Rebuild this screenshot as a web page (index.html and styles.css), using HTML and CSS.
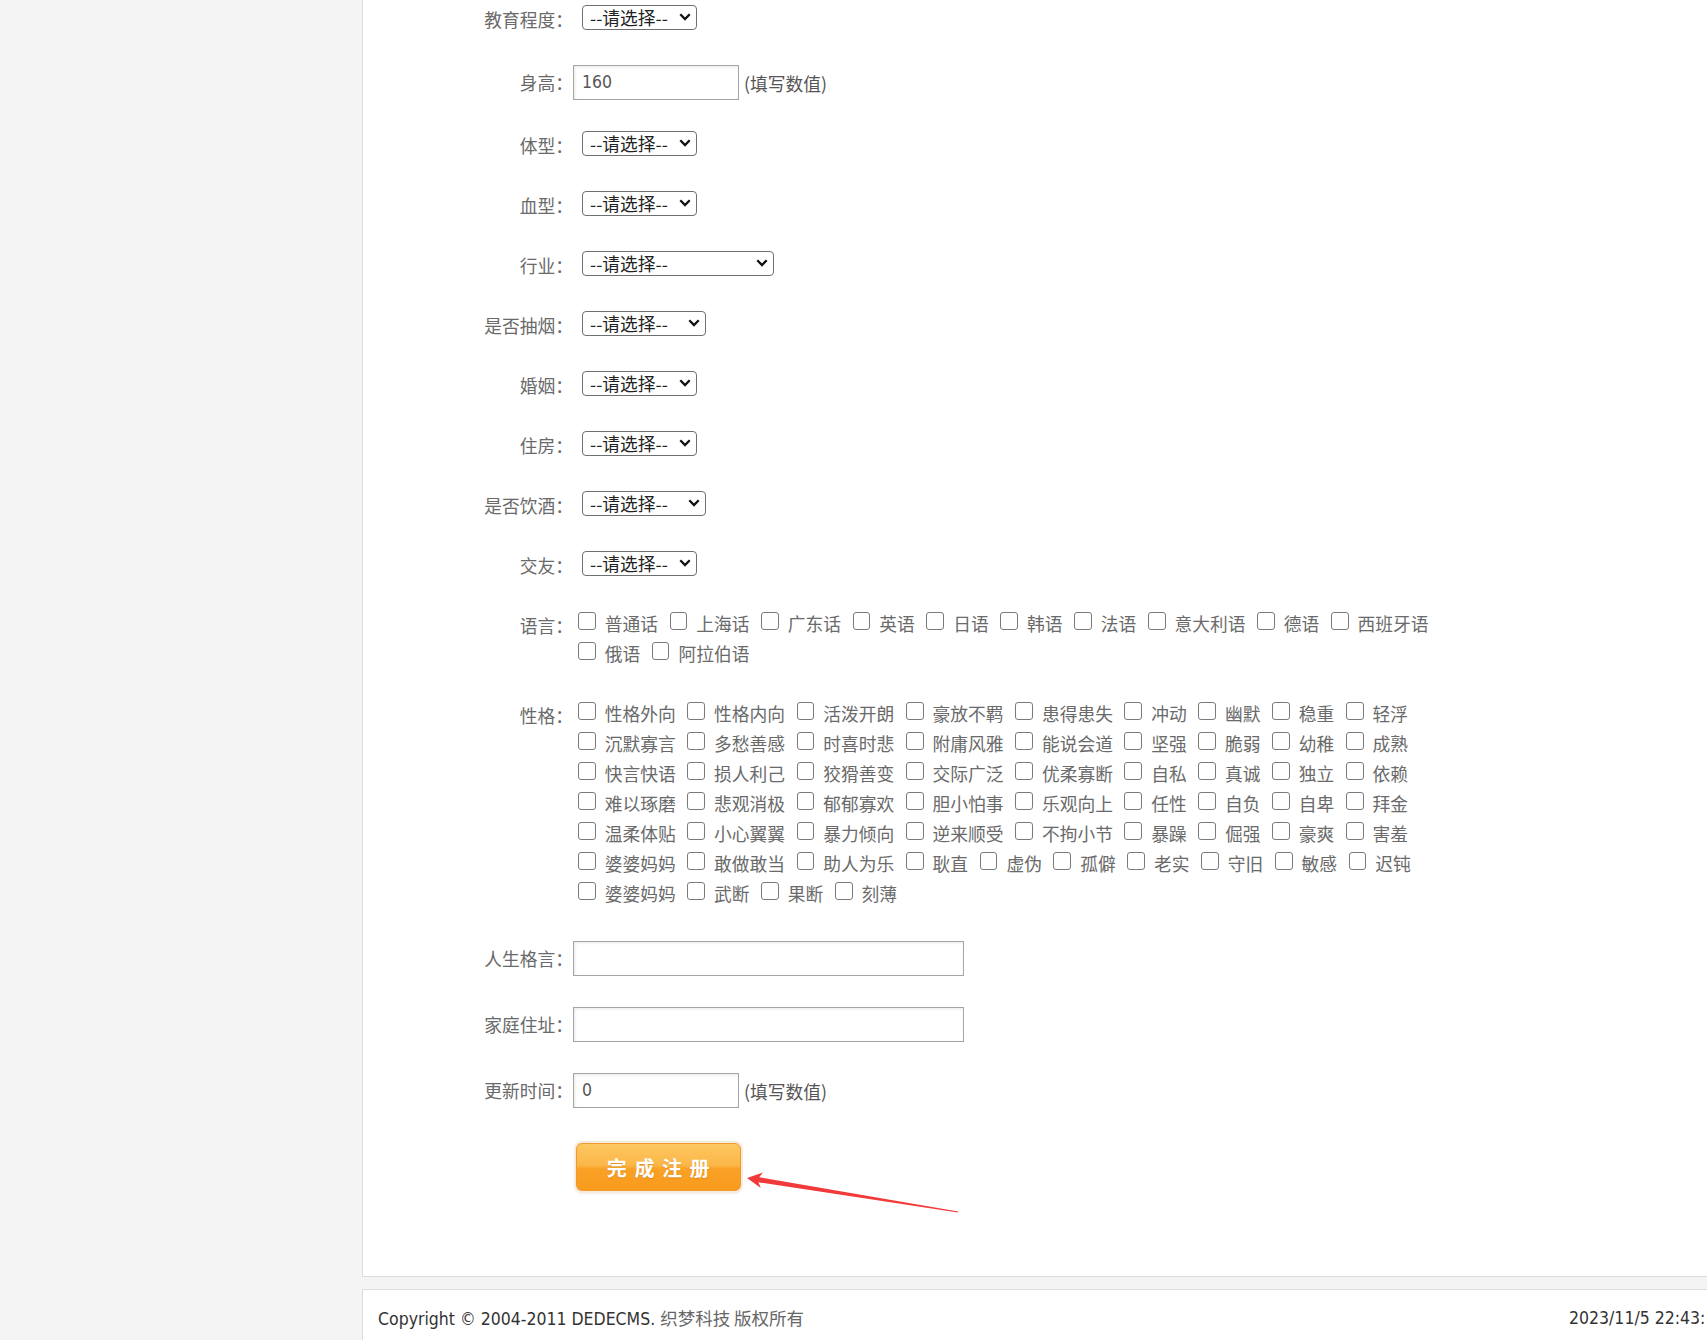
FILE: index.html
```html
<!DOCTYPE html>
<html lang="zh-CN">
<head>
<meta charset="utf-8">
<title>会员注册 - 详细资料</title>
<link rel="stylesheet" href="styles.css">
</head>
<body>
<div class="layout">
  <aside class="sidebar"></aside>
  <div class="content">
    <main class="panel">
      <form class="form">
        <div class="row"><span class="lbl">教育程度：</span><span class="sel"><select><option>--请选择--</option><option>初中</option><option>高中</option><option>大专</option><option>本科</option><option>硕士</option><option>博士</option></select><svg class="chev" viewBox="0 0 12 8"><path d="M1.3 1.3 L6 6 L10.7 1.3"/></svg></span></div>
        <div class="row tall"><span class="lbl">身高：</span><input class="txt" type="text" value="160"><span class="note">(填写数值)</span></div>
        <div class="row"><span class="lbl">体型：</span><span class="sel"><select><option>--请选择--</option><option>瘦长</option><option>匀称</option><option>丰满</option></select><svg class="chev" viewBox="0 0 12 8"><path d="M1.3 1.3 L6 6 L10.7 1.3"/></svg></span></div>
        <div class="row"><span class="lbl">血型：</span><span class="sel"><select><option>--请选择--</option><option>A型</option><option>B型</option><option>AB型</option><option>O型</option></select><svg class="chev" viewBox="0 0 12 8"><path d="M1.3 1.3 L6 6 L10.7 1.3"/></svg></span></div>
        <div class="row"><span class="lbl">行业：</span><span class="sel sel-wide"><select><option>--请选择--</option><option>计算机/互联网/通信</option><option>金融/银行/保险</option></select><svg class="chev" viewBox="0 0 12 8"><path d="M1.3 1.3 L6 6 L10.7 1.3"/></svg></span></div>
        <div class="row"><span class="lbl">是否抽烟：</span><span class="sel sel-mid"><select><option>--请选择--</option><option>不抽烟</option><option>偶尔抽</option><option>经常抽</option></select><svg class="chev" viewBox="0 0 12 8"><path d="M1.3 1.3 L6 6 L10.7 1.3"/></svg></span></div>
        <div class="row"><span class="lbl">婚姻：</span><span class="sel"><select><option>--请选择--</option><option>未婚</option><option>已婚</option></select><svg class="chev" viewBox="0 0 12 8"><path d="M1.3 1.3 L6 6 L10.7 1.3"/></svg></span></div>
        <div class="row"><span class="lbl">住房：</span><span class="sel"><select><option>--请选择--</option><option>已购房</option><option>租房</option></select><svg class="chev" viewBox="0 0 12 8"><path d="M1.3 1.3 L6 6 L10.7 1.3"/></svg></span></div>
        <div class="row"><span class="lbl">是否饮酒：</span><span class="sel sel-mid"><select><option>--请选择--</option><option>不喝酒</option><option>偶尔喝</option><option>经常喝</option></select><svg class="chev" viewBox="0 0 12 8"><path d="M1.3 1.3 L6 6 L10.7 1.3"/></svg></span></div>
        <div class="row"><span class="lbl">交友：</span><span class="sel"><select><option>--请选择--</option><option>普通朋友</option><option>恋人</option></select><svg class="chev" viewBox="0 0 12 8"><path d="M1.3 1.3 L6 6 L10.7 1.3"/></svg></span></div>
        <div class="row multi"><span class="lbl">语言：</span>
          <div class="opts">
            <label class="opt"><input type="checkbox">普通话</label>
            <label class="opt"><input type="checkbox">上海话</label>
            <label class="opt"><input type="checkbox">广东话</label>
            <label class="opt"><input type="checkbox">英语</label>
            <label class="opt"><input type="checkbox">日语</label>
            <label class="opt"><input type="checkbox">韩语</label>
            <label class="opt"><input type="checkbox">法语</label>
            <label class="opt"><input type="checkbox">意大利语</label>
            <label class="opt"><input type="checkbox">德语</label>
            <label class="opt"><input type="checkbox">西班牙语</label>
            <label class="opt"><input type="checkbox">俄语</label>
            <label class="opt"><input type="checkbox">阿拉伯语</label>
          </div>
        </div>
        <div class="row multi"><span class="lbl">性格：</span>
          <div class="opts">
            <label class="opt"><input type="checkbox">性格外向</label>
            <label class="opt"><input type="checkbox">性格内向</label>
            <label class="opt"><input type="checkbox">活泼开朗</label>
            <label class="opt"><input type="checkbox">豪放不羁</label>
            <label class="opt"><input type="checkbox">患得患失</label>
            <label class="opt"><input type="checkbox">冲动</label>
            <label class="opt"><input type="checkbox">幽默</label>
            <label class="opt"><input type="checkbox">稳重</label>
            <label class="opt"><input type="checkbox">轻浮</label>
            <label class="opt"><input type="checkbox">沉默寡言</label>
            <label class="opt"><input type="checkbox">多愁善感</label>
            <label class="opt"><input type="checkbox">时喜时悲</label>
            <label class="opt"><input type="checkbox">附庸风雅</label>
            <label class="opt"><input type="checkbox">能说会道</label>
            <label class="opt"><input type="checkbox">坚强</label>
            <label class="opt"><input type="checkbox">脆弱</label>
            <label class="opt"><input type="checkbox">幼稚</label>
            <label class="opt"><input type="checkbox">成熟</label>
            <label class="opt"><input type="checkbox">快言快语</label>
            <label class="opt"><input type="checkbox">损人利己</label>
            <label class="opt"><input type="checkbox">狡猾善变</label>
            <label class="opt"><input type="checkbox">交际广泛</label>
            <label class="opt"><input type="checkbox">优柔寡断</label>
            <label class="opt"><input type="checkbox">自私</label>
            <label class="opt"><input type="checkbox">真诚</label>
            <label class="opt"><input type="checkbox">独立</label>
            <label class="opt"><input type="checkbox">依赖</label>
            <label class="opt"><input type="checkbox">难以琢磨</label>
            <label class="opt"><input type="checkbox">悲观消极</label>
            <label class="opt"><input type="checkbox">郁郁寡欢</label>
            <label class="opt"><input type="checkbox">胆小怕事</label>
            <label class="opt"><input type="checkbox">乐观向上</label>
            <label class="opt"><input type="checkbox">任性</label>
            <label class="opt"><input type="checkbox">自负</label>
            <label class="opt"><input type="checkbox">自卑</label>
            <label class="opt"><input type="checkbox">拜金</label>
            <label class="opt"><input type="checkbox">温柔体贴</label>
            <label class="opt"><input type="checkbox">小心翼翼</label>
            <label class="opt"><input type="checkbox">暴力倾向</label>
            <label class="opt"><input type="checkbox">逆来顺受</label>
            <label class="opt"><input type="checkbox">不拘小节</label>
            <label class="opt"><input type="checkbox">暴躁</label>
            <label class="opt"><input type="checkbox">倔强</label>
            <label class="opt"><input type="checkbox">豪爽</label>
            <label class="opt"><input type="checkbox">害羞</label>
            <label class="opt"><input type="checkbox">婆婆妈妈</label>
            <label class="opt"><input type="checkbox">敢做敢当</label>
            <label class="opt"><input type="checkbox">助人为乐</label>
            <label class="opt"><input type="checkbox">耿直</label>
            <label class="opt"><input type="checkbox">虚伪</label>
            <label class="opt"><input type="checkbox">孤僻</label>
            <label class="opt"><input type="checkbox">老实</label>
            <label class="opt"><input type="checkbox">守旧</label>
            <label class="opt"><input type="checkbox">敏感</label>
            <label class="opt"><input type="checkbox">迟钝</label>
            <label class="opt"><input type="checkbox">婆婆妈妈</label>
            <label class="opt"><input type="checkbox">武断</label>
            <label class="opt"><input type="checkbox">果断</label>
            <label class="opt"><input type="checkbox">刻薄</label>
          </div>
        </div>
        <div class="row tall"><span class="lbl">人生格言：</span><input class="txt txt-long" type="text" value=""></div>
        <div class="row tall"><span class="lbl">家庭住址：</span><input class="txt txt-long" type="text" value=""></div>
        <div class="row tall"><span class="lbl">更新时间：</span><input class="txt" type="text" value="0"><span class="note">(填写数值)</span></div>
        <div class="row btn-row"><span class="lbl"></span><button type="button" class="submit">完成注册</button></div>
      </form>
    </main>
    <footer class="footer">
      <div class="copy">Copyright © 2004-2011 DEDECMS. <span class="cn">织梦科技 版权所有</span></div>
      <div class="time">2023/11/5 22:43:18</div>
    </footer>
  </div>
</div>
<svg class="arrow" viewBox="740 1165 225 55" width="225" height="55">
  <polygon points="747,1178 763,1172.6 759.2,1177.3 958.2,1211.4 957.8,1212.6 758.4,1182.3 760.8,1188"/>
</svg>
</body>
</html>
```

FILE: styles.css
```css
html {
  overflow: hidden;
}
body {
  margin: 0;
  background: #f4f4f4;
  font-family: "Noto Sans CJK SC", sans-serif;
  font-size: 17.75px;
  color: #666;
}
.layout {
  display: grid;
  grid-template-columns: 362px 1fr;
  min-height: 1340px;
}
.content {
  display: flex;
  flex-direction: column;
}
.panel {
  box-sizing: border-box;
  height: 1277px;
  background: #fff;
  border-left: 1px solid #dcdcdc;
  border-bottom: 1px solid #dcdcdc;
  padding-top: 2px;
}
.form {
  padding-left: 90px;
}
.row {
  display: flex;
  align-items: center;
  height: 30px;
  margin-bottom: 30px;
}
.row.tall {
  height: 36px;
}
.row.multi {
  height: auto;
  align-items: flex-start;
}
.lbl {
  box-sizing: border-box;
  width: 120px;
  flex: none;
  text-align: right;
  line-height: 30px;
  margin-top: 4px;
  color: #6a6a6a;
  white-space: nowrap;
}
.row.tall .lbl {
  margin-top: 3px;
}
.row.multi .lbl {
  margin-top: 2px;
}
.sel {
  position: relative;
  display: inline-block;
  margin-left: 9px;
  width: 115px;
}
.sel-mid {
  width: 124px;
}
.sel-wide {
  width: 192px;
}
.sel select {
  appearance: none;
  -webkit-appearance: none;
  box-sizing: border-box;
  display: block;
  width: 100%;
  height: 25px;
  margin: 0;
  padding: 0 0 0 7px;
  border: 1px solid #6f6f6f;
  border-radius: 4px;
  background: #fff;
  font-family: "Noto Sans CJK SC", sans-serif;
  font-size: 17.75px;
  line-height: 23px;
  color: #222;
}
.chev {
  position: absolute;
  right: 6px;
  top: 50%;
  width: 12px;
  height: 8px;
  margin-top: -4px;
  pointer-events: none;
  fill: none;
  stroke: #111;
  stroke-width: 2.3;
}
.txt {
  box-sizing: border-box;
  width: 166px;
  height: 35px;
  margin: 4px 0 0 0;
  padding: 0 8px;
  border: 1px solid #a5a5a5;
  box-shadow: inset 1px 1px 3px rgba(0, 0, 0, 0.09);
  background: #fff;
  font-family: "DejaVu Sans Condensed", "Liberation Sans", sans-serif;
  font-size: 17.5px;
  color: #555;
  outline: none;
}
.txt-long {
  width: 391px;
}
.note {
  margin-left: 5px;
  margin-top: 6px;
  color: #555;
}
.opts {
  display: flex;
  flex-wrap: wrap;
  width: 897px;
  padding-left: 5px;
}
.opt {
  display: flex;
  align-items: center;
  height: 30px;
  margin-right: 11.6px;
  color: #6a6a6a;
  white-space: nowrap;
}
.opt input {
  appearance: none;
  -webkit-appearance: none;
  box-sizing: border-box;
  flex: none;
  width: 17.7px;
  height: 17.7px;
  margin: 0 9px 0 0;
  border: 1.5px solid #7a7a7a;
  border-radius: 3px;
  background: #fff;
  position: relative;
  top: -2px;
}
.btn-row {
  height: auto;
  align-items: flex-start;
}
.submit {
  box-sizing: border-box;
  width: 165px;
  height: 48px;
  margin: 7px 0 0 3px;
  padding: 0;
  border: 1px solid #ee9a2e;
  border-radius: 6px;
  background: linear-gradient(#fdc761 0%, #fbb748 46%, #f9a126 54%, #f99b1d 100%);
  box-shadow: 0 0 0 2px #f7ebde, 0 2px 3px rgba(0, 0, 0, 0.12);
  font-family: "Noto Sans CJK SC", sans-serif;
  font-weight: bold;
  font-size: 20px;
  letter-spacing: 7.6px;
  text-indent: 7px;
  color: #fff;
  text-shadow: 0 1px 1px rgba(170, 90, 0, 0.35);
}
.footer {
  margin-top: 12px;
  flex: 1;
  display: flex;
  justify-content: space-between;
  background: #fff;
  border-top: 1px solid #dcdcdc;
  border-left: 1px solid #dcdcdc;
  font-family: "DejaVu Sans Condensed", "Liberation Sans", "Noto Sans CJK SC", sans-serif;
  font-size: 17.5px;
  line-height: 56px;
  color: #333;
}
.copy {
  padding-left: 15px;
  white-space: nowrap;
}
.copy .cn {
  font-family: "Noto Sans CJK SC", sans-serif;
  color: #666;
}
.time {
  width: 138px;
  flex: none;
  white-space: nowrap;
}
.arrow {
  position: absolute;
  left: 740px;
  top: 1165px;
  fill: #f23a3a;
}
```
